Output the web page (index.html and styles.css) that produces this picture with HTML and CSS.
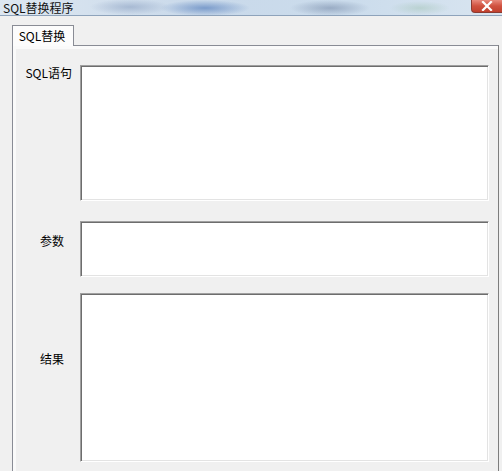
FILE: index.html
```html
<!DOCTYPE html>
<html>
  <head>
    <title>SQL替换程序</title>
    <link rel="stylesheet" href="styles.css">
  </head>
  <body>
    <div class="titlebar">
      <span class="title">SQL替换程序</span>
      <div class="btn-close">
        <svg width="12" height="10" viewBox="0 0 12 10">
          <path d="M2 1 L10 9 M10 1 L2 9" stroke="#ffffff" stroke-width="2.2" stroke-linecap="square" fill="none"/>
        </svg>
      </div>
    </div>
    <div class="window-body">
      <div class="tabs">
        <div class="tab active">SQL替换</div>
      </div>
      <div class="tab-page">
        <div class="row row-sql">
          <label class="field-label label-sql" for="sql">SQL语句</label>
          <textarea id="sql" class="field"></textarea>
        </div>
        <div class="row row-params">
          <label class="field-label label-params" for="params">参数</label>
          <textarea id="params" class="field"></textarea>
        </div>
        <div class="row row-result">
          <label class="field-label label-result" for="result">结果</label>
          <textarea id="result" class="field"></textarea>
        </div>
      </div>
    </div>
  </body>
</html>
```

FILE: styles.css
```css
html,
body {
  height: 471px;
}

body {
  margin: 0;
  background-color: #f0f0f0;
  font-family: "Noto Sans CJK SC", "Liberation Sans", sans-serif;
  font-size: 12px;
  color: #000000;
  overflow: hidden;
}

.titlebar {
  height: 15px;
  display: flex;
  align-items: flex-start;
  border-bottom: 1px solid #8ea3bb;
  background:
    radial-gradient(ellipse 40px 8px at 130px 7px, rgba(150, 170, 200, 0.7), transparent),
    radial-gradient(ellipse 45px 8px at 205px 8px, rgba(90, 130, 190, 0.7), transparent),
    radial-gradient(ellipse 40px 8px at 330px 8px, rgba(120, 140, 170, 0.6), transparent),
    radial-gradient(ellipse 30px 7px at 420px 8px, rgba(170, 200, 190, 0.6), transparent),
    linear-gradient(to right, #dde7f1, #c9d9ea 40%, #cbdcec 70%, #d9e5f0);
}

.title {
  margin-left: 3px;
  line-height: 15px;
  font-size: 12px;
  color: #111111;
}

.btn-close {
  margin-left: auto;
  width: 30px;
  height: 12px;
  border: 1px solid #8a3b32;
  border-top: none;
  border-right: none;
  border-radius: 0 0 0 4px;
  background: linear-gradient(to bottom, #e8897c, #d0513f 50%, #c0402e);
  display: flex;
  justify-content: center;
  align-items: center;
}

.window-body {
  padding: 9px 3px 0 12px;
}

.tabs {
  display: flex;
  position: relative;
  z-index: 1;
}

.tab {
  width: 58px;
  height: 20px;
  border: 1px solid #898c95;
  border-bottom: none;
  background-color: #fcfcfc;
  text-align: center;
  line-height: 20px;
  margin-bottom: -1px;
  padding-right: 2px;
}

.tab-page {
  box-sizing: border-box;
  height: 426px;
  border: 1px solid #898c95;
  border-right-color: #7d7d7d;
  border-bottom: none;
  box-shadow: inset 3px 3px 0 #fafafa;
  padding: 19px 9px 0 0;
}

.row {
  display: grid;
  grid-template-columns: 67px 1fr;
}

.row-sql {
  height: 136px;
}

.row-params {
  height: 56px;
  margin-top: 20px;
}

.row-result {
  height: 169px;
  margin-top: 16px;
}

.field-label {
  text-align: right;
  line-height: 16px;
}

.label-sql {
  padding-right: 8px;
}

.label-params {
  padding-right: 16px;
  padding-top: 12px;
}

.label-result {
  padding-right: 16px;
  padding-top: 58px;
}

.field {
  box-sizing: border-box;
  width: 100%;
  height: 100%;
  margin: 0;
  resize: none;
  background-color: #ffffff;
  border-top: 1px solid #a0a0a0;
  border-left: 1px solid #a0a0a0;
  border-bottom: 1px solid #ffffff;
  border-right: 1px solid #ffffff;
  box-shadow: inset 1px 1px 0 #6d6d6d, inset -1px -1px 0 #e3e3e3;
  outline: none;
  font-family: inherit;
  font-size: 12px;
}
```
